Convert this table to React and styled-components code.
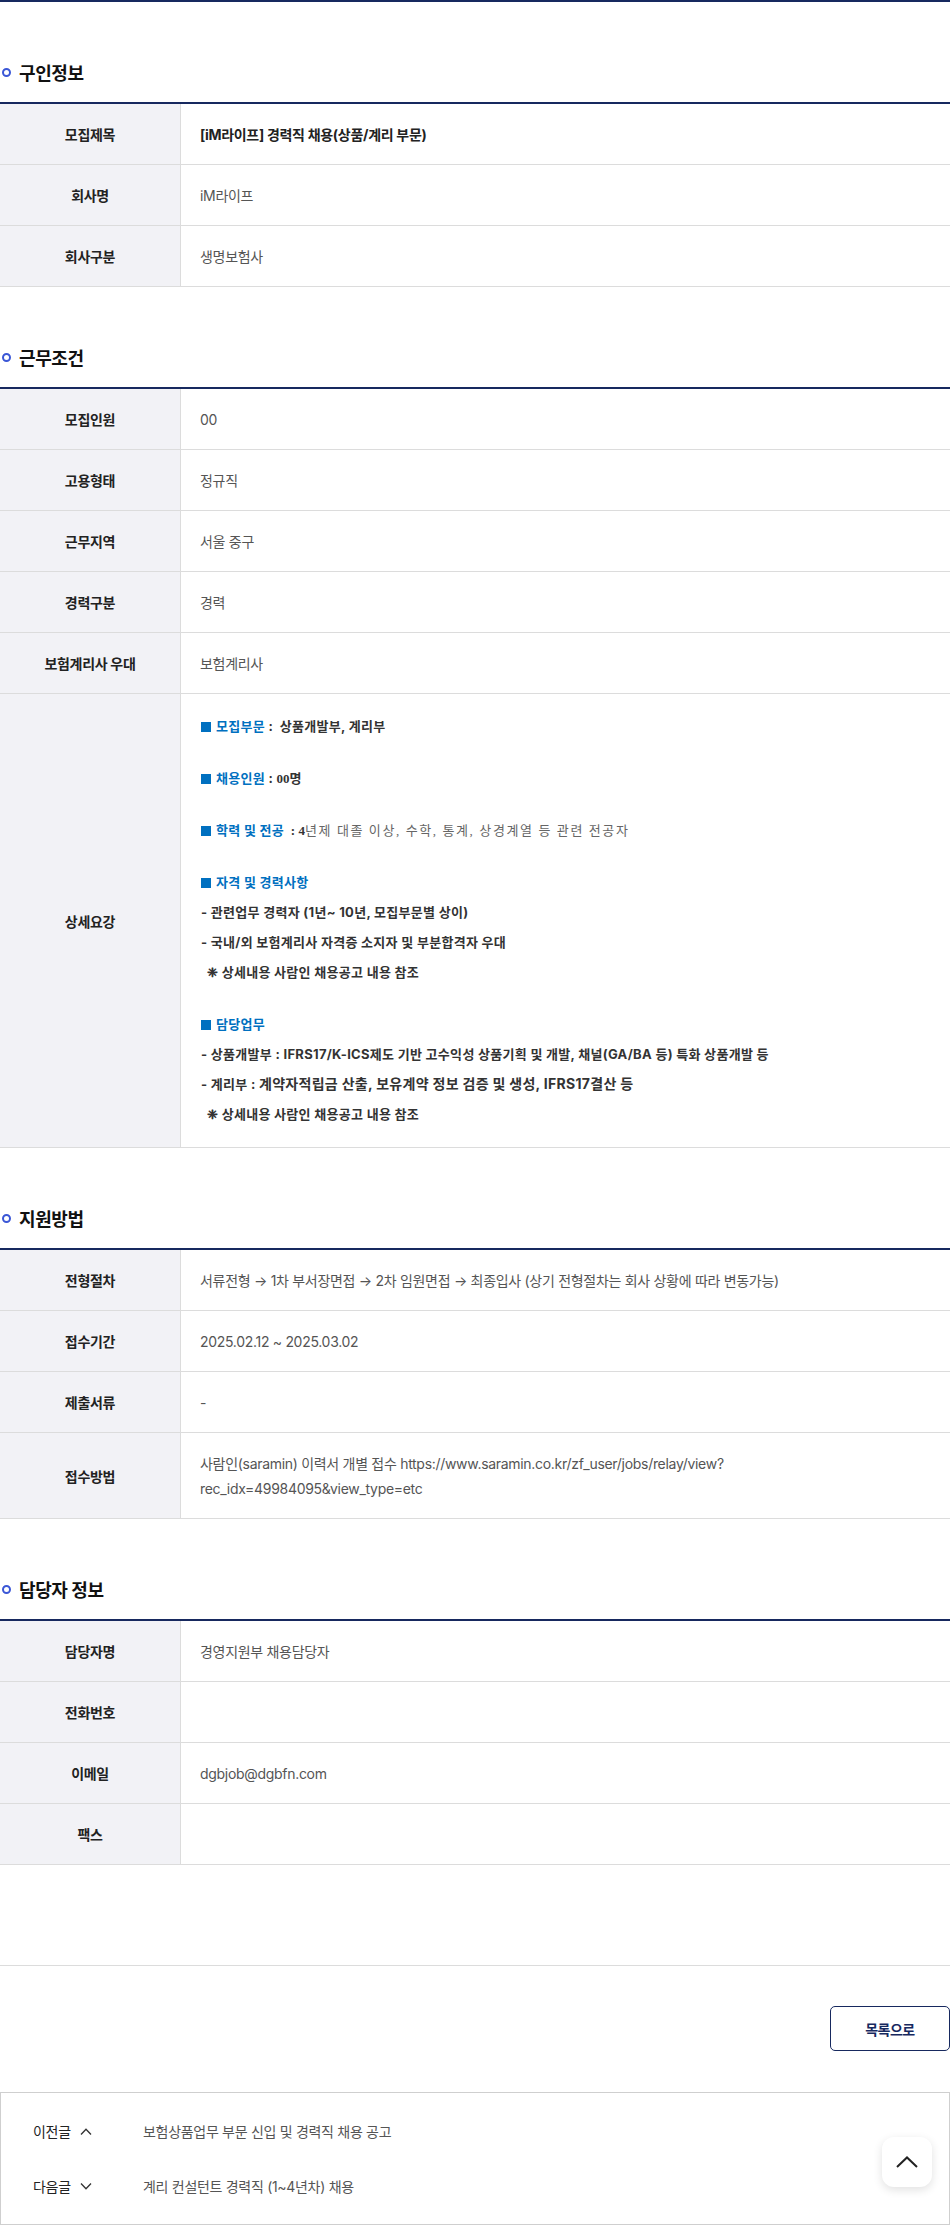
import * as React from 'react';
import styled, { createGlobalStyle } from 'styled-components';

const NAVY = '#17295f';
const LINE = '#dcdcdc';

export default function App() {
  return (
    <Page>
      <GlobalStyle />

      <Section>
        <SectionTitle>구인정보</SectionTitle>
        <InfoTable>
          <Row>
            <Label>모집제목</Label>
            <Value $strong>[iM라이프] 경력직 채용(상품/계리 부문)</Value>
          </Row>
          <Row>
            <Label>회사명</Label>
            <Value>iM라이프</Value>
          </Row>
          <Row>
            <Label>회사구분</Label>
            <Value>생명보험사</Value>
          </Row>
        </InfoTable>
      </Section>

      <Section>
        <SectionTitle>근무조건</SectionTitle>
        <InfoTable>
          <Row>
            <Label>모집인원</Label>
            <Value>00</Value>
          </Row>
          <Row>
            <Label>고용형태</Label>
            <Value>정규직</Value>
          </Row>
          <Row>
            <Label>근무지역</Label>
            <Value>서울 중구</Value>
          </Row>
          <Row>
            <Label>경력구분</Label>
            <Value>경력</Value>
          </Row>
          <Row>
            <Label>보험계리사 우대</Label>
            <Value>보험계리사</Value>
          </Row>
          <Row>
            <Label>상세요강</Label>
            <Detail>
              <DLine>
                <DHead>모집부문</DHead> :&nbsp; 상품개발부, 계리부
              </DLine>
              <Blank />
              <DLine>
                <DHead>채용인원</DHead> : <Serif $bold>00명</Serif>
              </DLine>
              <Blank />
              <DLine>
                <DHead>학력 및 전공</DHead>&nbsp; <Serif $bold>: 4</Serif>
                <Serif>년제 대졸 이상, 수학, 통계, 상경계열 등 관련 전공자</Serif>
              </DLine>
              <Blank />
              <DLine>
                <DHead>자격 및 경력사항</DHead>
              </DLine>
              <DLine>- 관련업무 경력자 (1년~ 10년, 모집부문별 상이)</DLine>
              <DLine>- 국내/외 보험계리사 자격증 소지자 및 부분합격자 우대</DLine>
              <DLine $note>❈ 상세내용 사람인 채용공고 내용 참조</DLine>
              <Blank />
              <DLine>
                <DHead>담당업무</DHead>
              </DLine>
              <DLine>
                - 상품개발부 : IFRS17/K-ICS제도 기반 고수익성 상품기획 및 개발, 채널(GA/BA 등) 특화
                상품개발 등
              </DLine>
              <DLine>
                - 계리부 : <Big>계약자적립금 산출, 보유계약 정보 검증 및 생성, IFRS17결산 등</Big>
              </DLine>
              <DLine $note>❈ 상세내용 사람인 채용공고 내용 참조</DLine>
            </Detail>
          </Row>
        </InfoTable>
      </Section>

      <Section>
        <SectionTitle>지원방법</SectionTitle>
        <InfoTable>
          <Row>
            <Label>전형절차</Label>
            <Value>
              서류전형 → 1차 부서장면접 → 2차 임원면접 → 최종입사 (상기 전형절차는 회사 상황에 따라
              변동가능)
            </Value>
          </Row>
          <Row>
            <Label>접수기간</Label>
            <Value>2025.02.12 ~ 2025.03.02</Value>
          </Row>
          <Row>
            <Label>제출서류</Label>
            <Value>-</Value>
          </Row>
          <Row>
            <Label>접수방법</Label>
            <Value>
              사람인(saramin) 이력서 개별 접수 https://www.saramin.co.kr/zf_user/jobs/relay/view?
              <br />
              rec_idx=49984095&amp;view_type=etc
            </Value>
          </Row>
        </InfoTable>
      </Section>

      <Section>
        <SectionTitle>담당자 정보</SectionTitle>
        <InfoTable>
          <Row>
            <Label>담당자명</Label>
            <Value>경영지원부 채용담당자</Value>
          </Row>
          <Row>
            <Label>전화번호</Label>
            <Value />
          </Row>
          <Row>
            <Label>이메일</Label>
            <Value>dgbjob@dgbfn.com</Value>
          </Row>
          <Row>
            <Label>팩스</Label>
            <Value />
          </Row>
        </InfoTable>
      </Section>

      <Divider />

      <ButtonBar>
        <ListButton>목록으로</ListButton>
      </ButtonBar>

      <PostNav>
        <NavRow>
          <NavLabel>
            이전글
            <Chevron dir="up" />
          </NavLabel>
          <NavTitle>보험상품업무 부문 신입 및 경력직 채용 공고</NavTitle>
        </NavRow>
        <NavRow>
          <NavLabel>
            다음글
            <Chevron dir="down" />
          </NavLabel>
          <NavTitle>계리 컨설턴트 경력직 (1~4년차) 채용</NavTitle>
        </NavRow>
      </PostNav>

      <TopButton aria-label="맨 위로">
        <svg width="22" height="12" viewBox="0 0 22 12" fill="none">
          <path d="M1 11L11 1.5L21 11" stroke="#222" strokeWidth="2" />
        </svg>
      </TopButton>
    </Page>
  );
}

function Chevron({ dir }) {
  return (
    <svg width="12" height="7" viewBox="0 0 12 7" fill="none">
      <path
        d={dir === 'up' ? 'M1 6.5L6 1.2L11 6.5' : 'M1 0.5L6 5.8L11 0.5'}
        stroke="#333"
        strokeWidth="1.3"
      />
    </svg>
  );
}

const GlobalStyle = createGlobalStyle`
  body {
    margin: 0;
    background: #fff;
    font-family: Inter, "Noto Sans CJK KR", "Noto Sans", sans-serif;
    color: #222;
  }
`;

const Page = styled.div`
  width: 950px;
  border-top: 2px solid ${NAVY};
`;

const Section = styled.section`
  padding-top: 57px;
`;

const SectionTitle = styled.h3`
  display: flex;
  align-items: center;
  height: 26px;
  margin: 0 0 17px;
  font-size: 18px;
  font-weight: 700;
  letter-spacing: -0.4px;
  color: #111;

  &::before {
    content: '';
    width: 5px;
    height: 5px;
    margin: 0 8px 0 2px;
    border: 2.5px solid #3b57d6;
    border-radius: 50%;
  }
`;

const InfoTable = styled.div`
  border-top: 2px solid ${NAVY};
`;

const Row = styled.div`
  display: flex;
  border-bottom: 1px solid ${LINE};
`;

const Label = styled.div`
  flex: 0 0 180px;
  display: flex;
  align-items: center;
  justify-content: center;
  background: #f2f2f6;
  border-right: 1px solid ${LINE};
  font-size: 14px;
  font-weight: 700;
  color: #222;
  letter-spacing: -0.3px;
`;

const Value = styled.div`
  flex: 1;
  min-height: 25px;
  padding: 17.5px 20px 17.5px 19px;
  font-size: 14px;
  line-height: 25px;
  letter-spacing: -0.3px;
  color: ${({ $strong }) => ($strong ? '#222' : '#555')};
  font-weight: ${({ $strong }) => ($strong ? 700 : 400)};
`;

const Detail = styled.div`
  flex: 1;
  padding: 17px 20px 18px;
`;

const DLine = styled.p`
  margin: 0;
  height: 30px;
  padding-left: ${({ $note }) => ($note ? '6px' : 0)};
  font-size: 13px;
  line-height: 30px;
  font-weight: 700;
  color: #333;
  letter-spacing: 0.3px;
  white-space: nowrap;
`;

const DHead = styled.span`
  color: #0070c0;

  &::before {
    content: '';
    display: inline-block;
    width: 10px;
    height: 10px;
    margin-right: 5px;
    background: #0070c0;
    vertical-align: -1px;
  }
`;

const Serif = styled.span`
  font-family: "Liberation Serif", "Noto Sans CJK KR", serif;
  font-weight: ${({ $bold }) => ($bold ? 700 : 400)};
  color: ${({ $bold }) => ($bold ? '#333' : '#666')};
  letter-spacing: ${({ $bold }) => ($bold ? '0' : '1.6px')};
`;

const Big = styled.span`
  font-size: 14px;
`;

const Blank = styled.div`
  height: 22px;
`;

const Divider = styled.hr`
  margin: 100px 0 0;
  border: 0;
  border-top: 1px solid ${LINE};
`;

const ButtonBar = styled.div`
  display: flex;
  justify-content: flex-end;
  padding: 40px 0 41px;
`;

const ListButton = styled.button`
  width: 120px;
  height: 45px;
  border: 1px solid ${NAVY};
  border-radius: 5px;
  background: #fff;
  font-family: inherit;
  font-size: 14px;
  font-weight: 700;
  color: ${NAVY};
  letter-spacing: -0.5px;
  cursor: pointer;
`;

const PostNav = styled.div`
  display: flex;
  flex-direction: column;
  gap: 29px;
  padding: 25px 32px;
  border: 1px solid #cfcfcf;
`;

const NavRow = styled.div`
  display: flex;
  align-items: center;
  height: 26px;
  font-size: 14px;
  letter-spacing: -0.3px;
`;

const NavLabel = styled.div`
  flex: 0 0 110px;
  display: flex;
  align-items: center;
  gap: 9px;
  color: #222;
`;

const NavTitle = styled.div`
  color: #555;
`;

const TopButton = styled.button`
  position: fixed;
  right: 18px;
  bottom: 41px;
  display: flex;
  align-items: center;
  justify-content: center;
  width: 50px;
  height: 50px;
  border: 0;
  border-radius: 12px;
  background: #fff;
  box-shadow: 0 3px 10px rgba(0, 0, 0, 0.12);
  cursor: pointer;
`;
